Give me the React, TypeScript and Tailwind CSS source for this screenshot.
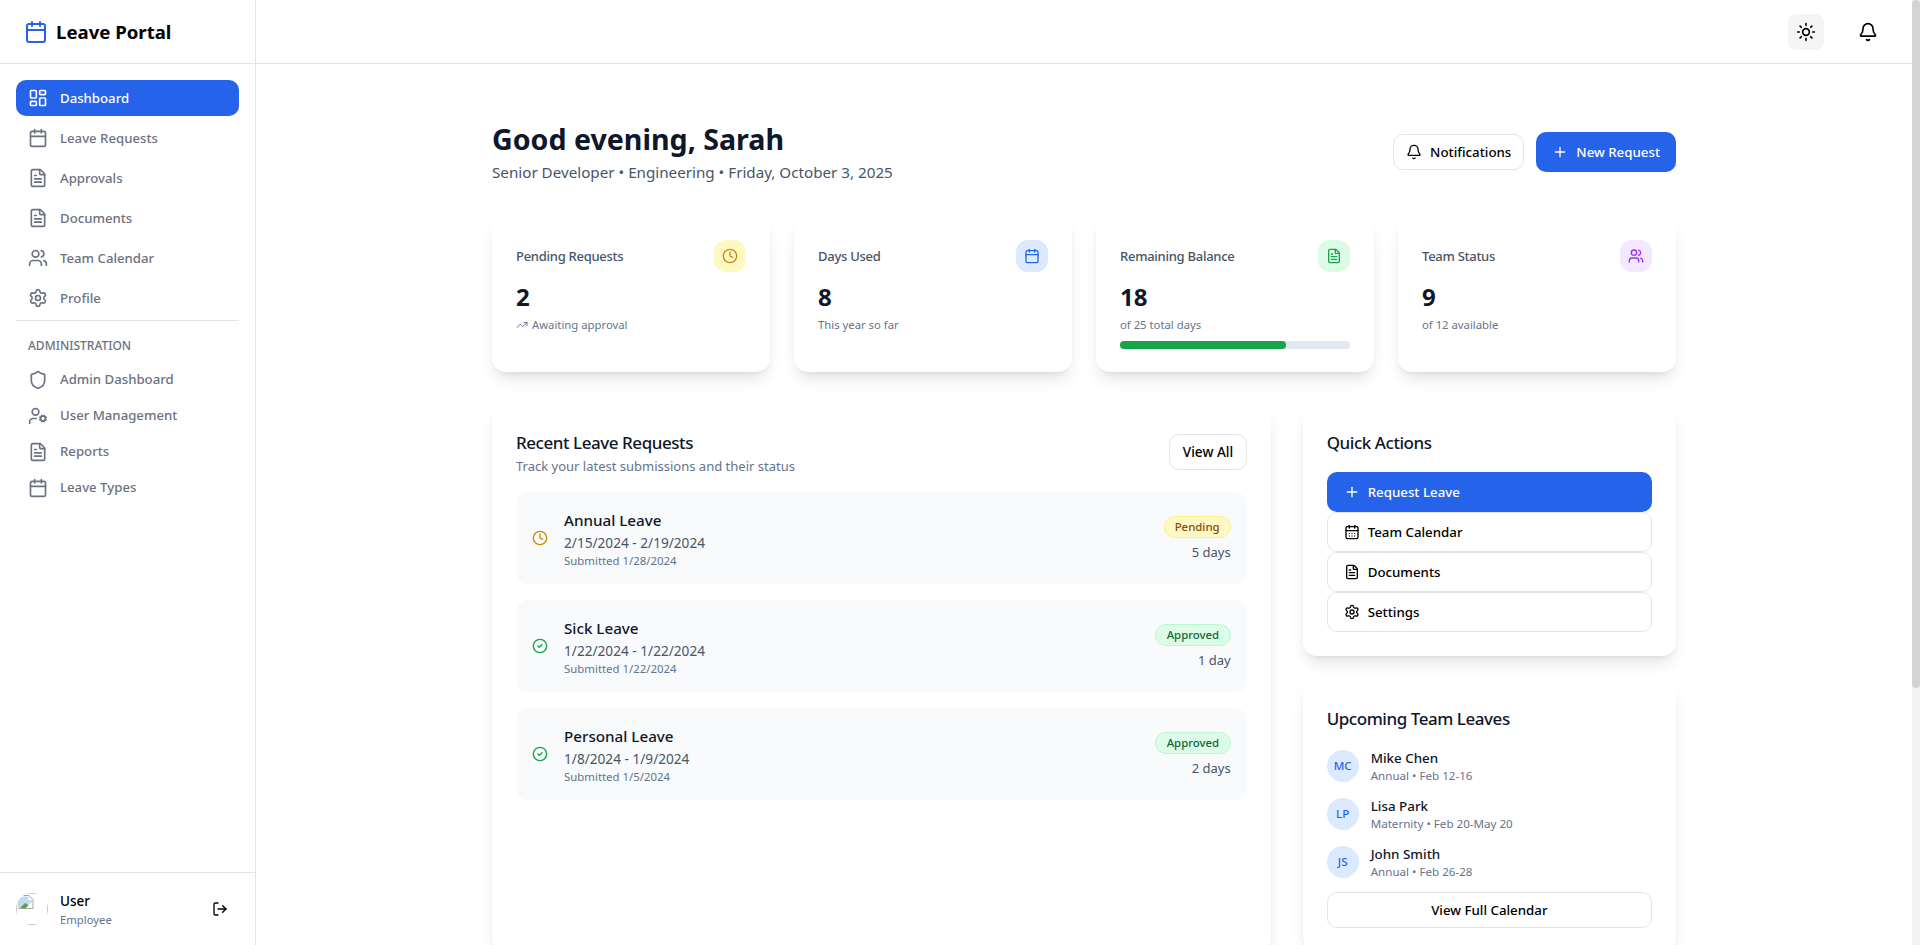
import { Bell, Calendar, CalendarDays, CircleCheck, Clock, FileText, LayoutDashboard, LogOut, Plus, Settings, Shield, Sun, TrendingUp, UserCog, Users } from "lucide-react";

const nav = [
  { label: "Leave Requests", Icon: Calendar },
  { label: "Approvals", Icon: FileText },
  { label: "Documents", Icon: FileText },
  { label: "Team Calendar", Icon: Users },
  { label: "Profile", Icon: Settings },
];
const admin = [
  { label: "Admin Dashboard", Icon: Shield },
  { label: "User Management", Icon: UserCog },
  { label: "Reports", Icon: FileText },
  { label: "Leave Types", Icon: Calendar },
];
const requests = [
  { title: "Annual Leave", dates: "2/15/2024 - 2/19/2024", sub: "Submitted 1/28/2024", status: "Pending", days: "5 days" },
  { title: "Sick Leave", dates: "1/22/2024 - 1/22/2024", sub: "Submitted 1/22/2024", status: "Approved", days: "1 day" },
  { title: "Personal Leave", dates: "1/8/2024 - 1/9/2024", sub: "Submitted 1/5/2024", status: "Approved", days: "2 days" },
];
const team = [
  { i: "MC", name: "Mike Chen", sub: "Annual • Feb 12-16" },
  { i: "LP", name: "Lisa Park", sub: "Maternity • Feb 20-May 20" },
  { i: "JS", name: "John Smith", sub: "Annual • Feb 26-28" },
];

function Stat({ label, value, hint, icon, box, children }: any) {
  return (
    <div className="h-[156px] rounded-[14px] bg-white p-6 shadow-lg">
      <div className="flex items-center justify-between">
        <span className="pt-px text-[13px] font-medium tracking-[-0.27px] text-[#475569]">{label}</span>
        <div className={`flex h-8 w-8 items-center justify-center rounded-xl ${box}`}>{icon}</div>
      </div>
      <div className="mt-[9px] text-2xl leading-8 font-bold text-[#0f172a]">{value}</div>
      {hint}
      {children}
    </div>
  );
}

const heading = "pt-px text-[17px] leading-7 font-medium tracking-[-0.45px] text-[#0f172a]";
const outline = "flex h-10 items-center gap-2 rounded-[10px] border border-[#e5e5e5] px-4 text-[13.3px] font-medium";
const hintText = "mt-1 text-[11.3px] leading-4 text-[#64748b]";

export default function App() {
  return (
    <div className="flex h-[945px] w-full overflow-hidden bg-white text-black [font-family:'Noto_Sans',sans-serif]">
      <aside className="flex w-64 shrink-0 flex-col border-r border-[#e5e5e5]">
        <div className="flex h-16 shrink-0 items-center gap-2 border-b border-[#e5e5e5] px-6">
          <Calendar className="h-6 w-6 text-[#2563eb]" />
          <span className="pt-[1px] text-[18.6px] font-bold">Leave Portal</span>
        </div>
        <nav className="flex flex-1 flex-col px-4 pt-4">
          <div className="flex h-9 items-center gap-3 rounded-[10px] bg-[#2563eb] px-3 text-[13.2px] font-medium text-white">
            <LayoutDashboard className="h-5 w-5" />
            <span className="pt-px">Dashboard</span>
          </div>
          {nav.map(({ label, Icon }) => (
            <div key={label} className="mt-1 flex h-9 items-center gap-3 px-3 text-[13.2px] font-medium text-[#6b7280]">
              <Icon className="h-5 w-5" />
              <span className="pt-px">{label}</span>
            </div>
          ))}
          <div className="mt-1 mb-[17px] border-t border-[#e5e5e5]" />
          <div className="px-3 text-xs leading-4 font-medium text-[#6b7280] uppercase">Administration</div>
          <div className="mt-[10px] flex flex-col gap-1">
            {admin.map(({ label, Icon }) => (
              <div key={label} className="flex h-8 items-center gap-3 px-3 text-[13.2px] font-medium text-[#6b7280]">
                <Icon className="h-5 w-5" />
                {label}
              </div>
            ))}
          </div>
        </nav>
        <div className="flex h-[73px] shrink-0 items-center border-t border-[#e5e5e5] px-4">
          <div className="relative h-8 w-8 shrink-0 overflow-hidden rounded-full">
            <div className="h-full w-full border border-[#c8c8c8]" />
            <svg className="absolute top-[1px] left-[2px] h-4 w-4" viewBox="0 0 16 16">
              <path d="M1 1.5h10l4 4v9H1z" fill="#fff" stroke="#a3a3a3" />
              <path d="M2 2.5h8.5v3.5H14v3L8 12l-6 1z" fill="#c5d9f1" />
              <path d="M2 14l5-5 4 2.5-3 2.5z" fill="#5ca33c" />
              <path d="M9 14l5-5" stroke="#fff" strokeWidth="1.6" />
            </svg>
          </div>
          <div className="ml-3 flex-1">
            <div className="text-[13.5px] leading-5 font-medium">User</div>
            <div className="pt-[1px] text-[11.3px] leading-4 text-[#64748b]">Employee</div>
          </div>
          <LogOut className="mr-[11px] h-4 w-4" />
        </div>
      </aside>
      <div className="flex min-w-0 flex-1 flex-col">
        <header className="flex h-16 shrink-0 items-center justify-end gap-[26px] border-b border-[#e5e5e5] pr-[26px]">
          <div className="flex h-9 w-9 items-center justify-center rounded-lg bg-[#f5f5f5]">
            <Sun className="h-5 w-5" />
          </div>
          <div className="flex h-9 w-9 items-center justify-center">
            <Bell className="h-5 w-5" />
          </div>
        </header>
        <main className="mx-auto w-full max-w-[1280px] px-12 pt-[56px]">
          <div className="flex h-[64px] items-start justify-between">
            <div>
              <h1 className="pt-[1px] text-[28.6px] leading-9 font-bold text-[#0f172a]">Good evening, Sarah</h1>
              <p className="mt-[3px] text-[15.2px] leading-6 text-[#475569]">Senior Developer • Engineering • Friday, October 3, 2025</p>
            </div>
            <div className="flex items-center gap-3 pt-3">
              <div className="flex h-9 items-center gap-2 rounded-[10px] border border-[#e5e5e5] px-3 text-[13.3px] font-medium">
                <Bell className="h-4 w-4" />
                <span className="pt-px">Notifications</span>
              </div>
              <div className="flex h-10 items-center gap-2 rounded-[10px] bg-[#2563eb] px-4 text-[13.3px] font-medium text-white">
                <Plus className="h-4 w-4" />
                <span className="pt-px">New Request</span>
              </div>
            </div>
          </div>
          <div className="mt-8 grid grid-cols-4 gap-6">
            <Stat label="Pending Requests" value="2" box="bg-[#fef9c3]" icon={<Clock className="h-4 w-4 text-[#ca8a04]" />}
              hint={<div className={`flex items-center gap-1 ${hintText}`}><TrendingUp className="h-3 w-3" />Awaiting approval</div>} />
            <Stat label="Days Used" value="8" box="bg-[#dbeafe]" icon={<Calendar className="h-4 w-4 text-[#2563eb]" />}
              hint={<div className={hintText}>This year so far</div>} />
            <Stat label="Remaining Balance" value="18" box="bg-[#dcfce7]" icon={<FileText className="h-4 w-4 text-[#16a34a]" />}
              hint={<div className={hintText}>of 25 total days</div>}>
              <div className="mt-2 h-2 w-full rounded-full bg-[#e2e8f0]">
                <div className="h-2 rounded-full bg-[#16a34a]" style={{ width: "72%" }} />
              </div>
            </Stat>
            <Stat label="Team Status" value="9" box="bg-[#f3e8ff]" icon={<Users className="h-4 w-4 text-[#9333ea]" />}
              hint={<div className={hintText}>of 12 available</div>} />
          </div>
          <div className="mt-8 grid grid-cols-3 gap-8">
            <div className="col-span-2 rounded-[14px] bg-white p-6 shadow-lg">
              <div className="flex items-start justify-between">
                <div>
                  <h2 className={heading}>Recent Leave Requests</h2>
                  <p className="-mt-px text-[13px] leading-5 text-[#64748b]">Track your latest submissions and their status</p>
                </div>
                <div className="mt-[6px] flex h-9 items-center rounded-[10px] border border-[#e5e5e5] px-[12.5px] text-[13.6px] font-medium">View All</div>
              </div>
              <div className="mt-4 flex flex-col gap-4">
                {requests.map((r) => (
                  <div key={r.title} className="flex h-[92px] items-center justify-between rounded-xl bg-[#f8fafc] p-4">
                    <div className="flex items-center gap-4">
                      {r.status === "Pending" ? <Clock className="h-4 w-4 text-[#ca8a04]" /> : <CircleCheck className="h-4 w-4 text-[#16a34a]" />}
                      <div>
                        <div className="text-[15.2px] leading-6 font-medium text-[#0f172a]">{r.title}</div>
                        <div className="mt-px text-[13.65px] leading-5 text-[#475569]">{r.dates}</div>
                        <div className="text-[11.4px] leading-4 text-[#64748b]">{r.sub}</div>
                      </div>
                    </div>
                    <div className="flex flex-col items-end gap-1 pt-[1px]">
                      <span className={r.status === "Pending" ? "rounded-full border border-[#fef08a] bg-[#fef9c3] px-[10px] py-[2px] text-[11.4px] leading-4 font-medium text-[#854d0e]" : "rounded-full border border-[#bbf7d0] bg-[#dcfce7] px-[10.5px] py-[2px] text-[11.4px] leading-4 font-medium text-[#166534]"}>{r.status}</span>
                      <span className="text-[13px] leading-5 text-[#475569]">{r.days}</span>
                    </div>
                  </div>
                ))}
              </div>
            </div>
            <div className="flex flex-col gap-6">
              <div className="rounded-[14px] bg-white p-6 shadow-lg">
                <h2 className={heading}>Quick Actions</h2>
                <div className="mt-[15px] flex flex-col">
                  <div className="flex h-10 items-center gap-2 rounded-[10px] bg-[#2563eb] px-[17px] text-[13.3px] font-medium text-white"><Plus className="h-4 w-4" /><span className="pt-px">Request Leave</span></div>
                  <div className={outline}><CalendarDays className="h-4 w-4" /><span className="pt-px">Team Calendar</span></div>
                  <div className={outline}><FileText className="h-4 w-4" /><span className="pt-px">Documents</span></div>
                  <div className={outline}><Settings className="h-4 w-4" /><span className="pt-px">Settings</span></div>
                </div>
              </div>
              <div className="rounded-[14px] bg-white p-6 shadow-lg">
                <h2 className={heading}>Upcoming Team Leaves</h2>
                <div className="mt-[17px] flex flex-col gap-4">
                  {team.map((t) => (
                    <div key={t.i} className="flex h-8 items-center gap-3">
                      <div className="flex h-8 w-8 items-center justify-center rounded-full bg-[#dbeafe] text-[11.6px] font-medium text-[#2563eb]">{t.i}</div>
                      <div>
                        <div className="text-[13.4px] leading-5 font-medium text-[#0f172a]">{t.name}</div>
                        <div className="text-[11.6px] leading-4 text-[#64748b]">{t.sub}</div>
                      </div>
                    </div>
                  ))}
                </div>
                <div className="mt-[14px] flex h-9 items-center justify-center rounded-[10px] border border-[#e5e5e5] text-[13.3px] font-medium"><span className="pt-px">View Full Calendar</span></div>
              </div>
            </div>
          </div>
        </main>
      </div>
      <div className="w-2 shrink-0 bg-[#f3f3f3]">
        <div className="h-[688px] w-full rounded-full bg-[#d4d4d4]" />
      </div>
    </div>
  );
}
